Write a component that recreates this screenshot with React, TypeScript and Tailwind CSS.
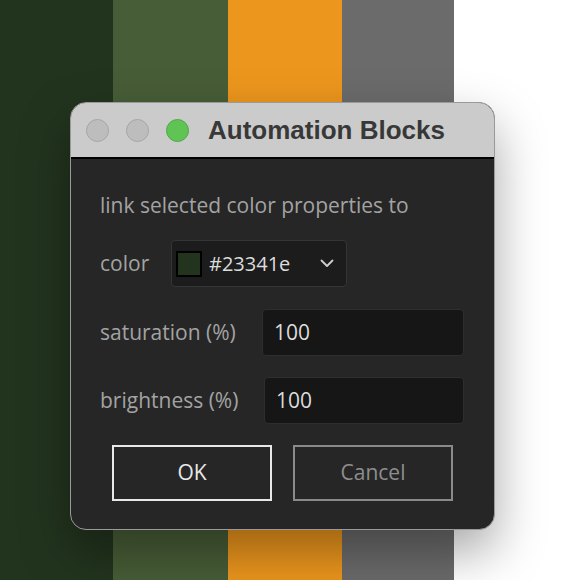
export default function App() {
  return (
    <div className="relative h-[580px] w-[580px] overflow-hidden bg-white">
      <div className="flex h-full">
        <div className="w-[113px] bg-[#22341e]" />
        <div className="w-[115px] bg-[#475d37]" />
        <div className="w-[114px] bg-[#ec961d]" />
        <div className="w-[112px] bg-[#6b6b6b]" />
        <div className="flex-1 bg-white" />
      </div>

      <div
        className="absolute left-[70px] top-[102px] w-[425px] overflow-hidden rounded-[16px] border border-[#9a9a9a] bg-[#262626] shadow-[0_22px_50px_rgba(0,0,0,0.35)]"
        style={{ fontFamily: '"Open Sans", "Noto Sans", sans-serif' }}
      >
        <div className="flex h-[56px] items-center border-b-2 border-black bg-[#cbcbcb] pl-[15px]">
          <div className="flex gap-[17px]">
            <span className="h-[23px] w-[23px] rounded-full border border-[#a6a6a6] bg-[#bdbdbd]" />
            <span className="h-[23px] w-[23px] rounded-full border border-[#a6a6a6] bg-[#bdbdbd]" />
            <span className="h-[23px] w-[23px] rounded-full border border-[#52a848] bg-[#5fc453]" />
          </div>
          <span
            className="ml-[19px] text-[26px] font-bold text-[#383838]"
            style={{ fontFamily: '"Liberation Sans", Arial, sans-serif' }}
          >
            Automation Blocks
          </span>
        </div>

        <div className="px-[29px] pb-[28px] pt-[34px] text-[21px] text-[#a3a3a3]">
          <div className="leading-[24px]">link selected color properties to</div>

          <div className="mt-[23px] flex items-center">
            <span className="w-[71px]">color</span>
            <div className="flex h-[47px] w-[176px] items-center rounded-[4px] border border-[#353535] bg-[#1c1c1c] pl-[4px]">
              <span className="h-[26px] w-[26px] border-2 border-black bg-[#23341e]" />
              <span className="ml-[7px] text-[20px] text-[#dcdcdc]">#23341e</span>
              <svg className="ml-auto mr-[12px]" width="14" height="9" viewBox="0 0 14 9" fill="none">
                <path d="M1.5 1.5 L7 7 L12.5 1.5" stroke="#cfcfcf" strokeWidth="1.8" strokeLinecap="round" strokeLinejoin="round" />
              </svg>
            </div>
          </div>

          <div className="mt-[22px] flex items-center">
            <span className="w-[162px]">saturation (%)</span>
            <div className="flex h-[47px] w-[202px] items-center rounded-[4px] border border-[#2e2e2e] bg-[#161616] pl-[11px] text-[#dcdcdc]">
              100
            </div>
          </div>

          <div className="mt-[21px] flex items-center">
            <span className="w-[164px]">brightness (%)</span>
            <div className="flex h-[47px] w-[200px] items-center rounded-[4px] border border-[#2e2e2e] bg-[#161616] pl-[11px] text-[#dcdcdc]">
              100
            </div>
          </div>

          <div className="mt-[21px] flex gap-[21px] pl-[12px]">
            <button className="flex h-[56px] w-[160px] items-center justify-center border-2 border-[#e8e8e8] text-[#e8e8e8]">
              OK
            </button>
            <button className="flex h-[56px] w-[160px] items-center justify-center border-2 border-[#8a8a8a] text-[#8e8e8e]">
              Cancel
            </button>
          </div>
        </div>
      </div>
    </div>
  );
}
